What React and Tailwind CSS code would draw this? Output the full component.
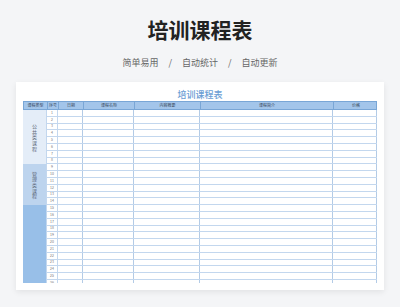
const cols = [
  { w: "w-[23px]", label: "课程类型" },
  { w: "w-[11px]", label: "序号" },
  { w: "w-[25px]", label: "日期" },
  { w: "w-[51px]", label: "课程名称" },
  { w: "w-[66px]", label: "内容概要" },
  { w: "w-[133px]", label: "课程简介" },
  { w: "w-[45px]", label: "价格" },
];

const groups = [
  { rows: 8, bg: "bg-[#e4edf8]", text: "公共类课程" },
  { rows: 6, bg: "bg-[#bdd4ee]", text: "管理类课程" },
  { rows: 12, bg: "bg-[#98bfe8]", text: "" },
];

export default function App() {
  let n = 0;
  return (
    <div className="w-[400px] h-[307px] overflow-hidden bg-[#f4f5f7] font-['Noto_Sans_CJK_SC','Noto_Sans',sans-serif]">
      <div className="pt-[15px] text-center">
        <h1 className="text-[21px] leading-[28px] font-bold text-[#222]">培训课程表</h1>
        <div className="mt-[13px] flex justify-center gap-[10px] text-[9px] leading-[14px] text-[#666]">
          <span>简单易用</span>
          <span>/</span>
          <span>自动统计</span>
          <span>/</span>
          <span>自动更新</span>
        </div>
      </div>

      <div className="mt-[12px] ml-[16px] w-[368px] h-[208px] bg-white shadow-[0_2px_6px_rgba(0,0,0,0.08)] px-[7px] pt-[6px]">
        <div className="text-center text-[9px] leading-[13px] font-medium text-[#6a9dd4]">培训课程表</div>
        <div className="h-[182px] overflow-hidden">
          <div className="flex h-[9px] bg-[#a3c5ea] border border-[#79a6d6]">
            {cols.map((c, i) => (
              <div
                key={i}
                className={`${c.w} shrink-0 flex items-center justify-center text-[4px] leading-[5px] text-[#3a4a5e] ${i > 0 ? "border-l border-[#79a6d6]" : ""}`}
              >
                {c.label}
              </div>
            ))}
          </div>
          <div className="flex">
            <div className="w-[23px] shrink-0">
              {groups.map((g, i) => (
                <div
                  key={i}
                  style={{ height: g.rows * 6.8 }}
                  className={`${g.bg} flex flex-col items-center justify-center`}
                >
                  {g.text.split("").map((ch, j) => (
                    <span key={j} className="block h-[5.6px] text-[5px] leading-[5.6px] text-[#5e6a7a]">
                      {ch}
                    </span>
                  ))}
                </div>
              ))}
            </div>
            <div className="flex-1">
              {groups.map((g) =>
                Array.from({ length: g.rows }).map(() => {
                  n += 1;
                  return (
                    <div key={n} className="flex h-[6.8px] border-b border-[#c3d7ee]">
                      <div className="w-[11px] shrink-0 border-l border-[#c3d7ee] flex items-center justify-center text-[3.5px] leading-[4px] text-[#777]">
                        {n}
                      </div>
                      <div className="w-[25px] shrink-0 border-l border-[#c3d7ee]" />
                      <div className="w-[51px] shrink-0 border-l border-[#b3cbe6]" />
                      <div className="w-[66px] shrink-0 border-l border-[#b3cbe6]" />
                      <div className="w-[133px] shrink-0 border-l border-[#b3cbe6]" />
                      <div className="w-[45px] shrink-0 border-l border-r border-[#b3cbe6]" />
                    </div>
                  );
                })
              )}
            </div>
          </div>
        </div>
      </div>
    </div>
  );
}
